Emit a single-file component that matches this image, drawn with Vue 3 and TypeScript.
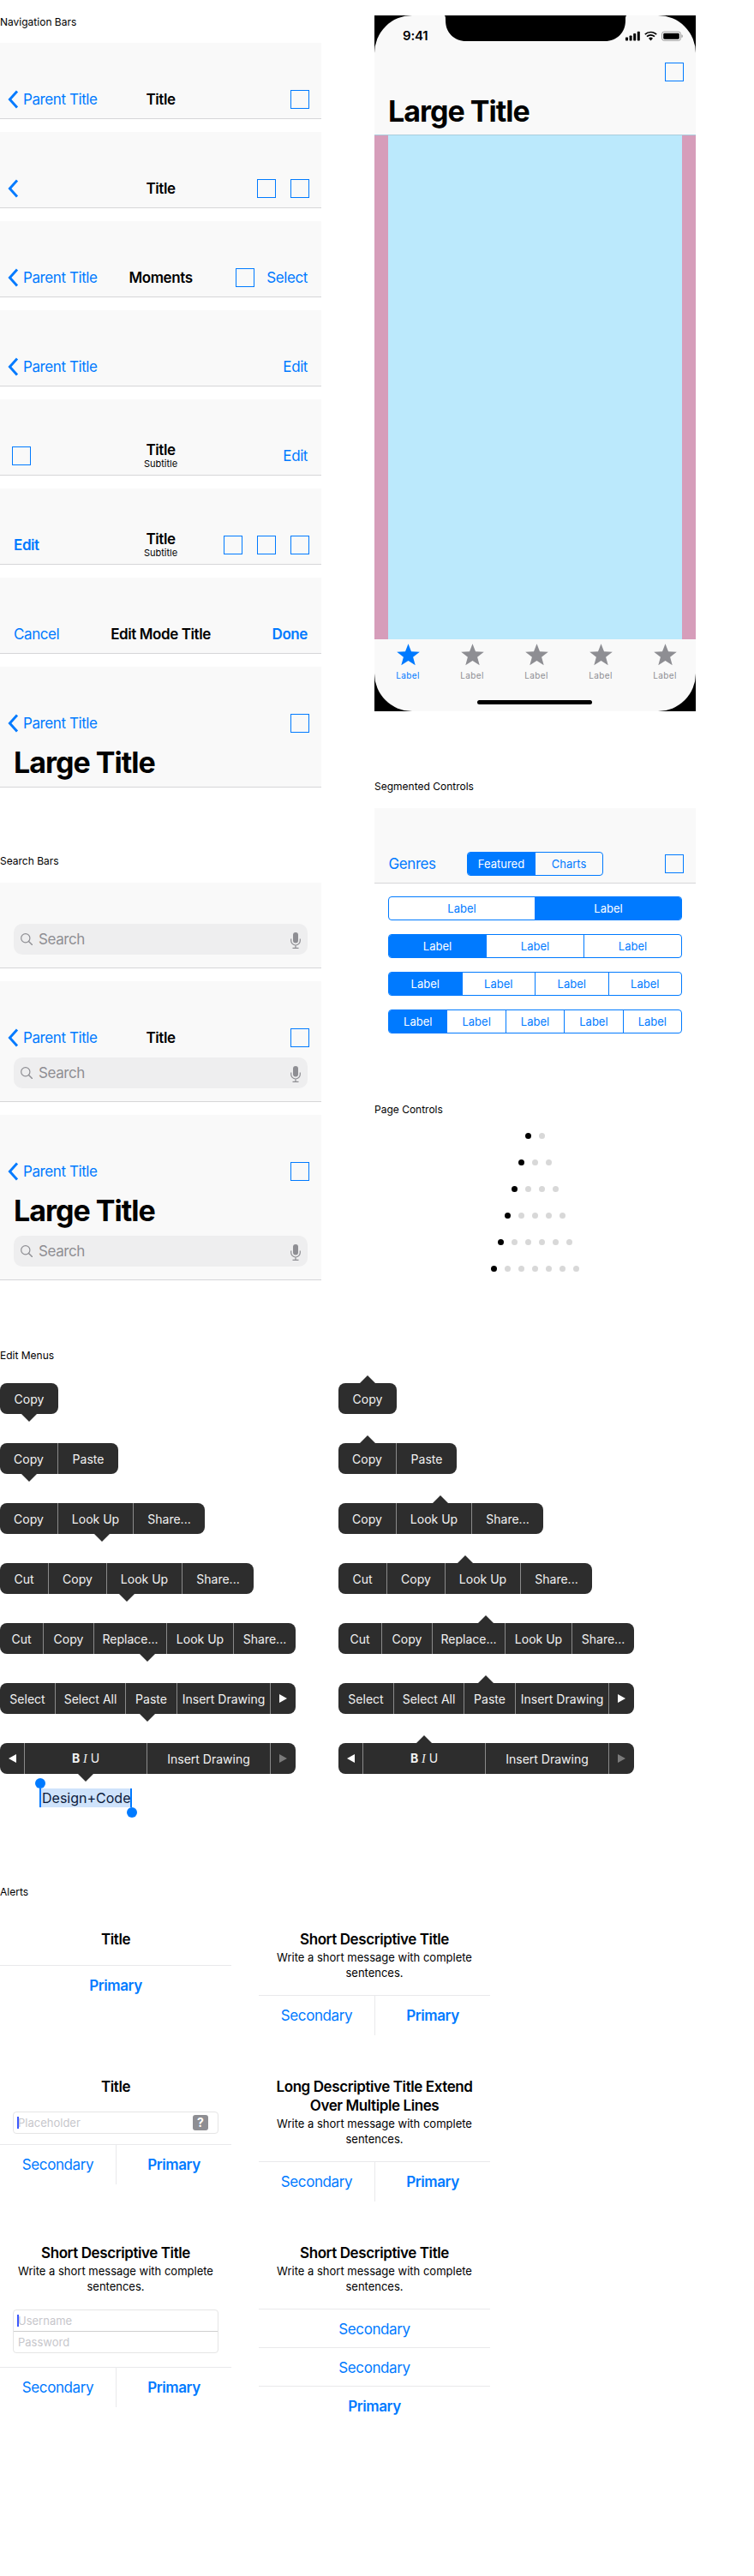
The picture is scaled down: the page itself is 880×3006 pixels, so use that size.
<script setup lang="ts">
type NavItem = { kind: 'back' | 'square' | 'text' | 'bold'; label?: string }
type NavBar = { title?: string; subtitle?: string; left: NavItem[]; right: NavItem[]; large?: boolean }
type MenuItem = { label?: string; w: number; icon?: 'next' | 'prev' | 'next-off' | 'biu' }
type Menu = { arrow: number; items: MenuItem[] }

const back: NavItem = { kind: 'back', label: 'Parent Title' }
const chevron: NavItem = { kind: 'back' }
const square: NavItem = { kind: 'square' }

const navBars: NavBar[] = [
    { title: 'Title', left: [back], right: [square] },
    { title: 'Title', left: [chevron], right: [square, square] },
    { title: 'Moments', left: [back], right: [square, { kind: 'text', label: 'Select' }] },
    { left: [back], right: [{ kind: 'text', label: 'Edit' }] },
    { title: 'Title', subtitle: 'Subtitle', left: [square], right: [{ kind: 'text', label: 'Edit' }] },
    { title: 'Title', subtitle: 'Subtitle', left: [{ kind: 'bold', label: 'Edit' }], right: [square, square, square] },
    { title: 'Edit Mode Title', left: [{ kind: 'text', label: 'Cancel' }], right: [{ kind: 'bold', label: 'Done' }] },
    { left: [back], right: [square], large: true },
]

const segments = [2, 3, 4, 5]
const pageDots = [2, 3, 4, 5, 6, 7]

const menus: Menu[] = [
    { arrow: 34, items: [{ label: 'Copy', w: 68 }] },
    { arrow: 34, items: [{ label: 'Copy', w: 68 }, { label: 'Paste', w: 70 }] },
    { arrow: 119, items: [{ label: 'Copy', w: 68 }, { label: 'Look Up', w: 88 }, { label: 'Share...', w: 83 }] },
    {
        arrow: 148,
        items: [{ label: 'Cut', w: 57 }, { label: 'Copy', w: 68 }, { label: 'Look Up', w: 88 }, { label: 'Share...', w: 83 }],
    },
    {
        arrow: 172,
        items: [
            { label: 'Cut', w: 51 },
            { label: 'Copy', w: 59 },
            { label: 'Replace...', w: 85 },
            { label: 'Look Up', w: 78 },
            { label: 'Share...', w: 72 },
        ],
    },
    {
        arrow: 172,
        items: [
            { label: 'Select', w: 65 },
            { label: 'Select All', w: 82 },
            { label: 'Paste', w: 60 },
            { label: 'Insert Drawing', w: 109 },
            { icon: 'next', w: 29 },
        ],
    },
    {
        arrow: 100,
        items: [
            { icon: 'prev', w: 29 },
            { icon: 'biu', w: 143 },
            { label: 'Insert Drawing', w: 144 },
            { icon: 'next-off', w: 29 },
        ],
    },
]
</script>

<template>
    <div class="page">
        <svg class="sprite" aria-hidden="true">
            <symbol id="chev" viewBox="0 0 13 22">
                <path d="M11 1.6 2.4 11l8.6 9.4" fill="none" stroke="#007aff" stroke-width="2.9" />
            </symbol>
            <symbol id="glass" viewBox="0 0 14 14">
                <circle cx="5.8" cy="5.8" r="5.1" fill="none" stroke="#8e8e93" stroke-width="1.2" />
                <path d="m9.5 9.5 4 4" fill="none" stroke="#8e8e93" stroke-width="1.4" stroke-linecap="round" />
            </symbol>
            <symbol id="mic" viewBox="0 0 12 19">
                <rect x="3" y="0" width="6" height="12.5" rx="3" fill="#8e8e93" />
                <path d="M.7 7.5v2.2a5.3 5.3 0 0 0 10.6 0V7.500M6 15v3.300M2.500 18.300h7" fill="none" stroke="#8e8e93" stroke-width="1.200" />
            </symbol>
            <symbol id="star" viewBox="0 0 27 26">
                <path d="M13.500.3 17 9.200l9.800.5-7.700 6.100 2.600 9.500-8.200-5.400-8.200 5.400 2.600-9.500L.2 9.700 10 9.200Z" stroke-linejoin="round" />
            </symbol>
        </svg>

        <div class="top">
            <div class="col">
                <h2 class="heading">Navigation Bars</h2>
                <div class="stack">
                    <div v-for="(bar, i) in navBars" :key="i" class="bar" :class="{ 'bar-large': bar.large }">
                        <div class="nav-row">
                            <div class="side">
                                <template v-for="(item, j) in bar.left" :key="j">
                                    <span v-if="item.kind === 'back'" class="back">
                                        <svg class="chev"><use href="#chev" /></svg>
                                        <span v-if="item.label">{{ item.label }}</span>
                                    </span>
                                    <span v-else-if="item.kind === 'square'" class="square" />
                                    <span v-else class="link" :class="{ bold: item.kind === 'bold' }">{{ item.label }}</span>
                                </template>
                            </div>
                            <div class="nav-title">
                                <div v-if="bar.title" class="title" :class="{ 'has-sub': bar.subtitle }">{{ bar.title }}</div>
                                <div v-if="bar.subtitle" class="subtitle">{{ bar.subtitle }}</div>
                            </div>
                            <div class="side side-right">
                                <template v-for="(item, j) in bar.right" :key="j">
                                    <span v-if="item.kind === 'square'" class="square" />
                                    <span v-else class="link" :class="{ bold: item.kind === 'bold' }">{{ item.label }}</span>
                                </template>
                            </div>
                        </div>
                        <div v-if="bar.large" class="large-title">Large Title</div>
                    </div>
                </div>

                <h2 class="heading search-heading">Search Bars</h2>
                <div class="stack">
                    <div class="bar search-only">
                        <div class="search">
                            <svg class="glass"><use href="#glass" /></svg>
                            <span class="search-text">Search</span>
                            <svg class="mic"><use href="#mic" /></svg>
                        </div>
                    </div>
                    <div class="bar search-bar">
                        <div class="nav-row">
                            <div class="side">
                                <span class="back">
                                    <svg class="chev"><use href="#chev" /></svg>
                                    <span>Parent Title</span>
                                </span>
                            </div>
                            <div class="nav-title"><div class="title">Title</div></div>
                            <div class="side side-right"><span class="square" /></div>
                        </div>
                        <div class="search">
                            <svg class="glass"><use href="#glass" /></svg>
                            <span class="search-text">Search</span>
                            <svg class="mic"><use href="#mic" /></svg>
                        </div>
                    </div>
                    <div class="bar search-bar">
                        <div class="nav-row">
                            <div class="side">
                                <span class="back">
                                    <svg class="chev"><use href="#chev" /></svg>
                                    <span>Parent Title</span>
                                </span>
                            </div>
                            <div class="nav-title" />
                            <div class="side side-right"><span class="square" /></div>
                        </div>
                        <div class="large-title">Large Title</div>
                        <div class="search">
                            <svg class="glass"><use href="#glass" /></svg>
                            <span class="search-text">Search</span>
                            <svg class="mic"><use href="#mic" /></svg>
                        </div>
                    </div>
                </div>
            </div>

            <div class="col">
                <div class="phone">
                    <div class="screen">
                        <svg class="notch" width="214" height="30" viewBox="0 0 214 30">
                            <path d="M0 0C2 0 2 2 2 6 2 20 12 30 26 30H188C202 30 212 20 212 6 212 2 212 0 214 0Z" />
                        </svg>
                        <div class="status">
                            <span class="time">9:41</span>
                            <svg class="status-icons" width="67" height="12" viewBox="0 0 67 12">
                                <rect x="0" y="7.500" width="3" height="4" rx=".7" />
                                <rect x="4.600" y="5.500" width="3" height="6" rx=".7" />
                                <rect x="9.200" y="3" width="3" height="8.500" rx=".7" />
                                <rect x="13.800" y=".8" width="3" height="10.700" rx=".7" />
                                <path d="M22.800 4.200a9.600 9.600 0 0 1 13.400 0M25 6.700a6.400 6.400 0 0 1 9 0" fill="none" stroke="#000" stroke-width="1.700" />
                                <path d="m27 8.800a3.600 3.600 0 0 1 5 0l-2.500 2.600Z" />
                                <rect x="42.500" y="1" width="22" height="10.400" rx="2.800" fill="none" stroke="#000" stroke-opacity=".35" />
                                <rect x="44.200" y="2.700" width="18.600" height="7" rx="1.400" />
                                <path d="M65.500 4.300v3.800c.8-.3 1.300-1 1.300-1.900s-.5-1.600-1.300-1.900Z" opacity=".4" />
                            </svg>
                        </div>
                        <div class="nav-row"><div /><div /><div class="side side-right"><span class="square" /></div></div>
                        <div class="large-title phone-title">Large Title</div>
                        <div class="content"><div class="content-inner" /></div>
                        <div class="tabs">
                            <div class="tab-row">
                                <div v-for="n in 5" :key="n" class="tab" :class="{ active: n === 1 }">
                                    <svg class="star"><use href="#star" /></svg>
                                    <span>Label</span>
                                </div>
                            </div>
                            <div class="home" />
                        </div>
                    </div>
                </div>

                <h2 class="heading seg-heading">Segmented Controls</h2>
                <div class="bar seg-bar">
                    <span class="genres">Genres</span>
                    <div class="seg seg-small">
                        <span class="on">Featured</span>
                        <span>Charts</span>
                    </div>
                    <span class="square square-end" />
                </div>
                <div class="seg-list">
                    <div v-for="count in segments" :key="count" class="seg">
                        <span v-for="n in count" :key="n" :class="{ on: count === 2 ? n === 2 : n === 1 }">Label</span>
                    </div>
                </div>

                <h2 class="heading page-heading">Page Controls</h2>
                <div class="dots">
                    <div v-for="count in pageDots" :key="count" class="dot-row">
                        <span v-for="n in count" :key="n" class="dot" :class="{ current: n === 1 }" />
                    </div>
                </div>
            </div>
        </div>

        <h2 class="heading menu-heading">Edit Menus</h2>
        <div class="menus">
            <div v-for="dir in ['down', 'up']" :key="dir" class="menu-col">
                <div v-for="(menu, i) in menus" :key="i" class="menu">
                    <span class="tip" :class="dir" :style="{ left: menu.arrow + 'px' }" />
                    <div
                        v-for="(item, j) in menu.items"
                        :key="j"
                        class="menu-item"
                        :style="{ width: item.w + 'px' }"
                    >
                        <template v-if="item.label">{{ item.label }}</template>
                        <span v-else-if="item.icon === 'next'" class="tri tri-right" />
                        <span v-else-if="item.icon === 'next-off'" class="tri tri-right off" />
                        <span v-else-if="item.icon === 'prev'" class="tri tri-left" />
                        <span v-else class="biu"><b>B</b> <i>I</i> U</span>
                    </div>
                </div>
                <div v-if="dir === 'down'" class="selection">
                    <span class="handle handle-start" />
                    <span class="selected">Design+Code</span>
                    <span class="handle handle-end" />
                </div>
            </div>
        </div>

        <h2 class="heading alert-heading">Alerts</h2>
        <div class="alerts">
            <div class="alert">
                <div class="alert-body"><div class="alert-title">Title</div></div>
                <div class="alert-btns one"><span class="primary">Primary</span></div>
            </div>
            <div class="alert">
                <div class="alert-body">
                    <div class="alert-title">Short Descriptive Title</div>
                    <p class="alert-msg">Write a short message with complete sentences.</p>
                </div>
                <div class="alert-btns"><span>Secondary</span><span class="primary">Primary</span></div>
            </div>
            <div class="alert">
                <div class="alert-body with-field">
                    <div class="alert-title">Title</div>
                    <div class="fields">
                        <div class="field">
                            <span class="caret" />Placeholder
                            <span class="question">?</span>
                        </div>
                    </div>
                </div>
                <div class="alert-btns"><span>Secondary</span><span class="primary">Primary</span></div>
            </div>
            <div class="alert">
                <div class="alert-body">
                    <div class="alert-title">Long Descriptive Title Extend Over Multiple Lines</div>
                    <p class="alert-msg">Write a short message with complete sentences.</p>
                </div>
                <div class="alert-btns"><span>Secondary</span><span class="primary">Primary</span></div>
            </div>
            <div class="alert">
                <div class="alert-body with-fields">
                    <div class="alert-title">Short Descriptive Title</div>
                    <p class="alert-msg">Write a short message with complete sentences.</p>
                    <div class="fields">
                        <div class="field"><span class="caret" />Username</div>
                        <div class="field">Password</div>
                    </div>
                </div>
                <div class="alert-btns"><span>Secondary</span><span class="primary">Primary</span></div>
            </div>
            <div class="alert">
                <div class="alert-body">
                    <div class="alert-title">Short Descriptive Title</div>
                    <p class="alert-msg">Write a short message with complete sentences.</p>
                </div>
                <div class="alert-btns one"><span>Secondary</span></div>
                <div class="alert-btns one"><span>Secondary</span></div>
                <div class="alert-btns one"><span class="primary">Primary</span></div>
            </div>
        </div>
    </div>
</template>

<style scoped>
.page {
    width: 880px;
    padding-top: 18px;
    font-family: Inter, 'Liberation Sans', sans-serif;
    color: #000;
}
.sprite {
    position: absolute;
    width: 0;
    height: 0;
}
.top {
    display: grid;
    grid-template-columns: 375px 375px;
    column-gap: 62px;
}
.heading {
    margin: 0;
    font-size: 12px;
    font-weight: 400;
    line-height: 15px;
}
.col > .heading:first-child {
    margin-bottom: 17px;
}
.stack {
    display: flex;
    flex-direction: column;
    gap: 15px;
}
.bar {
    box-sizing: border-box;
    width: 375px;
    height: 89px;
    padding-top: 44px;
    background: #f9f9f9;
    border-bottom: 1px solid #d6d6d8;
}
.bar-large {
    height: 141px;
}
.nav-row {
    display: grid;
    grid-template-columns: 1fr auto 1fr;
    align-items: center;
    height: 44px;
    padding: 0 14px;
}
.side {
    display: flex;
    align-items: center;
    gap: 17px;
}
.side-right {
    justify-content: flex-end;
}
.side-right .square + .link {
    margin-left: -3px;
}
.back {
    display: flex;
    align-items: center;
    margin-left: -5px;
    color: #007aff;
    font-size: 17px;
    letter-spacing: -0.41px;
    white-space: nowrap;
}
.chev {
    width: 13px;
    height: 22px;
    margin-right: 5px;
}
.square {
    box-sizing: border-box;
    display: block;
    width: 22px;
    height: 22px;
    border: 1px solid #007aff;
}
.square-end {
    margin-left: auto;
    margin-right: 14px;
}
.link {
    margin: 0 2px;
    color: #007aff;
    font-size: 17px;
    letter-spacing: -0.41px;
}
.bold {
    font-weight: 600;
}
.nav-title {
    text-align: center;
}
.title {
    font-size: 17px;
    font-weight: 600;
    letter-spacing: -0.41px;
    line-height: 22px;
    white-space: nowrap;
}
.title.has-sub {
    line-height: 18px;
}
.subtitle {
    font-size: 11px;
    line-height: 14px;
}
.large-title {
    height: 52px;
    padding-left: 16px;
    font-size: 34px;
    font-weight: 700;
    letter-spacing: -1px;
    line-height: 48px;
    white-space: nowrap;
}
.search-heading {
    margin-top: 78px;
    margin-bottom: 18px;
}
.search-only {
    height: 100px;
    padding-top: 48px;
}
.search-bar {
    height: auto;
}
.search-bar .search {
    margin-top: 1px;
    margin-bottom: 15px;
}
.search {
    display: flex;
    align-items: center;
    height: 36px;
    margin: 0 16px;
    padding: 0 8px;
    background: #eeeeef;
    border-radius: 10px;
}
.glass {
    width: 14px;
    height: 14px;
    margin-right: 7px;
}
.search-text {
    flex: 1;
    color: #8e8e93;
    font-size: 17px;
    letter-spacing: -0.41px;
}
.mic {
    width: 12px;
    height: 19px;
    margin-top: 2px;
}
.phone {
    height: 812px;
    background: #000;
}
.screen {
    position: relative;
    display: flex;
    flex-direction: column;
    height: 812px;
    overflow: hidden;
    background: #f9f9f9;
    border-radius: 44px;
}
.notch {
    position: absolute;
    top: 0;
    left: 81px;
}
.status {
    display: flex;
    align-items: center;
    justify-content: space-between;
    height: 44px;
    padding: 2px 15px 0 33px;
    box-sizing: border-box;
}
.time {
    font-size: 15px;
    font-weight: 600;
    letter-spacing: -0.2px;
}
.status-icons {
    margin-top: 1px;
}
.phone-title {
    box-sizing: border-box;
    border-bottom: 1px solid #a9cddd;
}
.content {
    flex: 1;
    padding: 0 16px;
    background: #d69dba;
}
.content-inner {
    height: 100%;
    background: #bbe9fc;
}
.tabs {
    height: 84px;
    box-sizing: border-box;
    padding-top: 5px;
}
.tab-row {
    display: grid;
    grid-template-columns: repeat(5, 75px);
    padding-left: 1.5px;
}
.tab {
    display: flex;
    flex-direction: column;
    align-items: center;
    color: #8e8e93;
    fill: #8e8e93;
    font-size: 10px;
    letter-spacing: 0.4px;
    line-height: 12px;
}
.tab.active {
    color: #007aff;
    fill: #007aff;
}
.star {
    width: 27px;
    height: 26px;
    margin-bottom: 5px;
}
.home {
    width: 134px;
    height: 5px;
    margin: 23px 0 0 120px;
    background: #000;
    border-radius: 3px;
}
.seg-heading {
    margin-top: 80px;
    margin-bottom: 18px;
}
.seg-bar {
    display: flex;
    align-items: center;
    height: 88px;
    padding: 51px 0 8px 16.5px;
}
.genres {
    width: 91.5px;
    color: #007aff;
    font-size: 17px;
    letter-spacing: -0.41px;
}
.seg {
    box-sizing: border-box;
    display: flex;
    height: 28px;
    overflow: hidden;
    color: #007aff;
    font-size: 13px;
    line-height: 26px;
    text-align: center;
    border: 1px solid #007aff;
    border-radius: 4px;
}
.seg span {
    flex: 1;
}
.seg span + span {
    border-left: 1px solid #007aff;
}
.seg .on {
    color: #fff;
    background: #007aff;
}
.seg-small {
    width: 159px;
}
.seg-list {
    display: flex;
    flex-direction: column;
    gap: 16px;
    padding: 15px 16px 0;
}
.page-heading {
    margin-top: 81px;
    margin-bottom: 20px;
}
.dots {
    display: flex;
    flex-direction: column;
    align-items: center;
    gap: 24px;
}
.dot-row {
    display: flex;
    gap: 9px;
}
.dot {
    width: 7px;
    height: 7px;
    background: #d8d8d8;
    border-radius: 50%;
}
.dot.current {
    background: #000;
}
.menu-heading {
    margin-top: 80px;
    margin-bottom: 25px;
}
.menus {
    display: grid;
    grid-template-columns: 395px 345px;
}
.menu-col {
    display: flex;
    flex-direction: column;
    align-items: flex-start;
    gap: 34px;
}
.menu {
    position: relative;
    display: flex;
    height: 36px;
    background: #2d2d2d;
    border-radius: 8px;
}
.tip {
    position: absolute;
    width: 0;
    height: 0;
    margin-left: -9px;
    border-left: 9px solid transparent;
    border-right: 9px solid transparent;
}
.tip.down {
    top: 36px;
    border-top: 9px solid #2d2d2d;
}
.tip.up {
    top: -9px;
    border-bottom: 9px solid #2d2d2d;
}
.menu-item {
    box-sizing: border-box;
    display: flex;
    align-items: center;
    justify-content: center;
    color: #f2f2f2;
    font-size: 14px;
    white-space: nowrap;
    border-right: 1px solid #8a8a8a;
}
.menu-item:last-child {
    border-right: 0;
}
.tri {
    width: 0;
    height: 0;
    border-top: 5.5px solid transparent;
    border-bottom: 5.5px solid transparent;
}
.tri-right {
    border-left: 9px solid #fff;
}
.tri-right.off {
    border-left-color: #7a7a7a;
}
.tri-left {
    border-right: 9px solid #fff;
}
.biu i {
    font-family: 'Liberation Serif', serif;
}
.selection {
    position: relative;
    margin: -17px 0 0 47px;
    width: 107px;
    height: 22px;
}
.selected {
    display: block;
    height: 22px;
    margin-left: -1px;
    padding-left: 1px;
    color: #0b1a3a;
    font-size: 16px;
    line-height: 22px;
    white-space: nowrap;
    background: #cfe3fb;
    border-left: 2px solid #007aff;
    border-right: 2px solid #007aff;
}
.handle {
    position: absolute;
    width: 12px;
    height: 12px;
    background: #007aff;
    border-radius: 50%;
}
.handle-start {
    top: -12px;
    left: -6px;
}
.handle-end {
    top: 22px;
    right: -6px;
}
.alert-heading {
    margin-top: 91px;
    margin-bottom: 18px;
}
.alerts {
    display: grid;
    grid-template-columns: 270px 270px;
    column-gap: 32px;
    row-gap: 32px;
    align-items: start;
}
.alert-body {
    padding: 19px 16px 19px;
    text-align: center;
}
.alert-title {
    font-size: 17px;
    font-weight: 600;
    letter-spacing: -0.41px;
    line-height: 22px;
}
.alert-msg {
    margin: 1px 0 -2px;
    font-size: 13px;
    line-height: 18px;
}
.with-field {
    padding-bottom: 12px;
}
.with-fields {
    padding-bottom: 16px;
}
.fields {
    margin: 18px -1px 0;
    overflow: hidden;
    border: 1px solid #e5e5e5;
    border-radius: 4px;
}
.with-fields .fields {
    margin-top: 20px;
}
.field {
    position: relative;
    box-sizing: border-box;
    height: 24px;
    padding-left: 5px;
    color: #c7c7cc;
    font-size: 13px;
    line-height: 24px;
    text-align: left;
}
.field + .field {
    height: 25px;
    border-top: 1px solid #cfcfcf;
}
.caret {
    position: absolute;
    top: 5px;
    left: 4px;
    width: 2px;
    height: 14px;
    background: #3d5afe;
}
.question {
    position: absolute;
    top: 3px;
    right: 11px;
    width: 18px;
    height: 18px;
    color: #fff;
    font-size: 14px;
    font-weight: 700;
    line-height: 18px;
    text-align: center;
    background: #8e8e93;
    border-radius: 3px;
}
.alert-btns {
    display: grid;
    grid-template-columns: 1fr 1fr;
    height: 45px;
    box-sizing: border-box;
    color: #007aff;
    font-size: 17px;
    letter-spacing: -0.41px;
    line-height: 46px;
    text-align: center;
    border-top: 1px solid #e9e9eb;
}
.alert-btns.one {
    grid-template-columns: 1fr;
}
.alert-btns span + span {
    border-left: 1px solid #e9e9eb;
}
.primary {
    font-weight: 600;
}
</style>
